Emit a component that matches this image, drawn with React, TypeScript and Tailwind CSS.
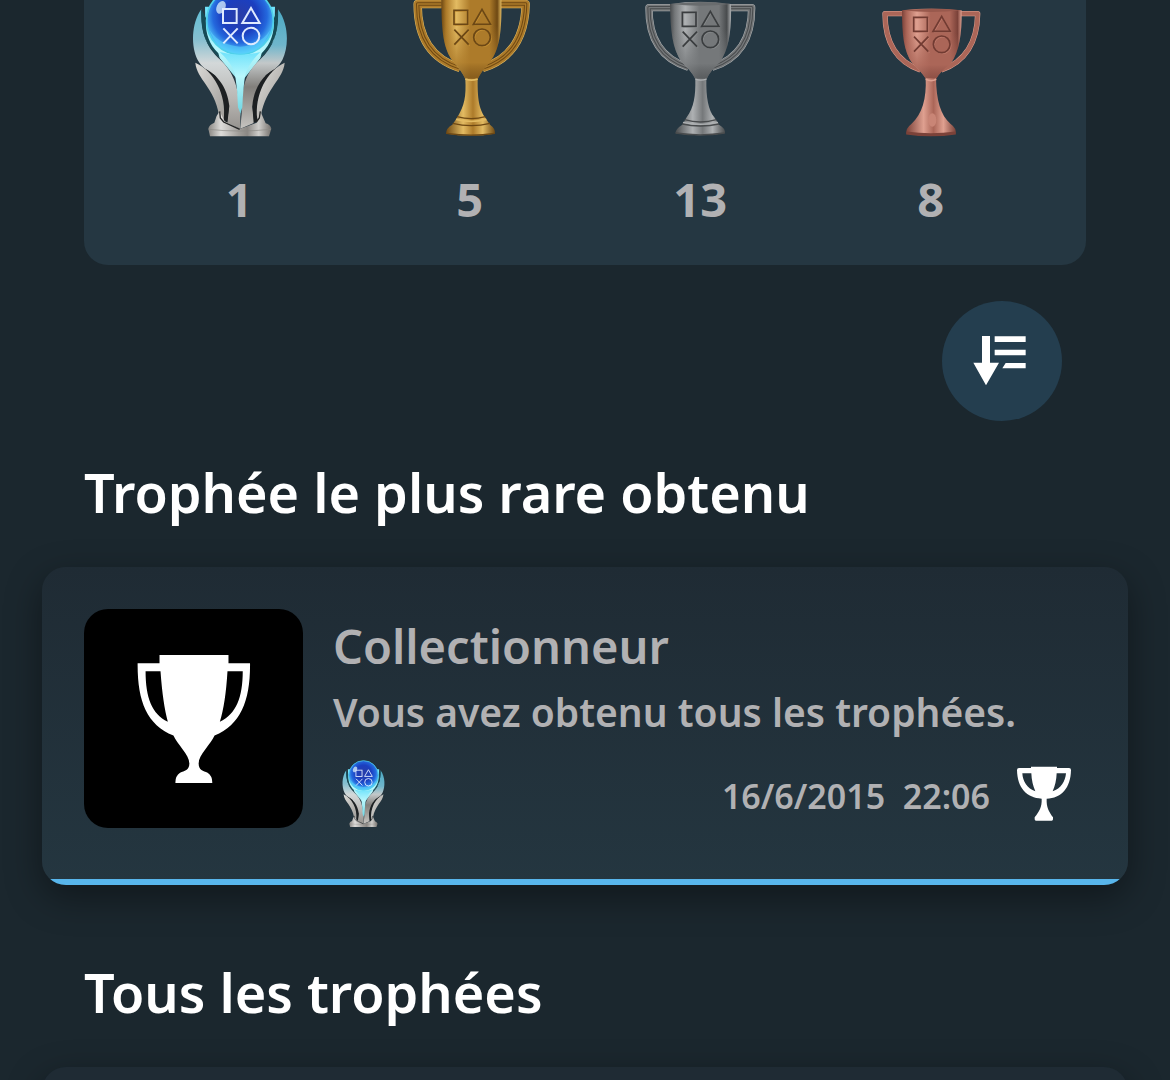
import React from 'react';

/** The four controller shapes engraved on each cup. */
function Shapes({ x, y, color, width = 5, highlight }: { x: number; y: number; color: string; width?: number; highlight?: string }) {
  const shapes = (
    <>
      <rect x="0" y="3" width="41" height="42" />
      <path d="M84 0 L110 45 H58 Z" />
      <path d="M1 61 L44 106 M44 61 L1 106" />
      <circle cx="84" cy="84" r="25" />
    </>
  );
  return (
    <g transform={`translate(${x} ${y})`} fill="none" strokeWidth={width}>
      {highlight && (
        <g transform="translate(3 3)" stroke={highlight} strokeWidth="2">
          {shapes}
        </g>
      )}
      <g stroke={color}>{shapes}</g>
    </g>
  );
}

function PlatinumTrophy({ id, className, viewBox }: { id: string; className: string; viewBox: string }) {
  return (
    <svg className={className} viewBox={viewBox} role="img" aria-label="Platine">
      <defs>
        <radialGradient id={`${id}-orb`} cx="0.5" cy="0.42" r="0.6">
          <stop offset="0" stopColor="#2a3da6" />
          <stop offset="0.45" stopColor="#1b3fc0" />
          <stop offset="0.68" stopColor="#2468dd" />
          <stop offset="0.88" stopColor="#4bb9f6" />
          <stop offset="1" stopColor="#6be6fb" />
        </radialGradient>
        <linearGradient id={`${id}-wing`} x1="0" y1="0" x2="0" y2="1">
          <stop offset="0" stopColor="#63bfd6" />
          <stop offset="0.25" stopColor="#86bfd0" />
          <stop offset="0.45" stopColor="#d3d8d9" />
          <stop offset="0.75" stopColor="#b9b7b4" />
          <stop offset="1" stopColor="#96938f" />
        </linearGradient>
        <linearGradient id={`${id}-wing-right`} x1="0" y1="0" x2="0" y2="1">
          <stop offset="0" stopColor="#4ba9c4" />
          <stop offset="0.3" stopColor="#6fb6cc" />
          <stop offset="0.45" stopColor="#c3c8c9" />
          <stop offset="0.65" stopColor="#827f7b" />
          <stop offset="1" stopColor="#c6c4c0" />
        </linearGradient>
        <linearGradient id={`${id}-base`} x1="0" y1="0" x2="1" y2="0">
          <stop offset="0" stopColor="#8a8783" />
          <stop offset="0.2" stopColor="#dddcda" />
          <stop offset="0.48" stopColor="#a19e9a" />
          <stop offset="0.62" stopColor="#8b8884" />
          <stop offset="0.8" stopColor="#cfcecb" />
          <stop offset="1" stopColor="#75716d" />
        </linearGradient>
        <linearGradient id={`${id}-glow`} x1="0" y1="0" x2="0" y2="1">
          <stop offset="0" stopColor="#6fe2fb" />
          <stop offset="0.4" stopColor="#b9f7fc" />
          <stop offset="1" stopColor="#6fd5e2" />
        </linearGradient>
        <linearGradient id={`${id}-lower`} x1="0" y1="0" x2="1" y2="1">
          <stop offset="0" stopColor="#dcdbd8" />
          <stop offset="1" stopColor="#a09d99" />
        </linearGradient>
      </defs>
      <path d="M78 20 L80 120 L120 172 L176 240 L184 350 L192 240 L246 172 L286 120 L288 20 Z" fill={`url(#${id}-glow)`} />
      <path d="M67 28 C36 72 36 140 56 180 C68 202 88 214 108 226 L150 320 L144 368 L184 386 V340 C178 270 170 222 122 178 C84 142 66 104 67 28 Z" fill={`url(#${id}-wing)`} />
      <path d="M297 28 C330 72 330 140 310 180 C298 202 278 214 260 226 L220 320 L226 368 L184 386 L188 340 C188 270 194 222 244 178 C282 142 298 104 297 28 Z" fill={`url(#${id}-wing-right)`} />
      <path d="M67 28 C64 92 78 136 122 174 L118 160 C86 128 78 92 81 54 Z M297 28 C300 92 286 136 244 174 L248 160 C280 128 286 92 285 54 Z" fill="#164b56" />
      <circle cx="183" cy="63" r="100" fill={`url(#${id}-orb)`} stroke="#4fd0ea" strokeWidth="5" />
      <path d="M92 90 Q116 158 183 163 Q250 158 274 90 Q244 136 183 140 Q122 136 92 90 Z" fill="#58d0fb" opacity="0.6" />
      <ellipse cx="126" cy="22" rx="13" ry="20" fill="#e8fbff" opacity="0.7" transform="rotate(25 126 22)" />
      <path d="M122 156 Q183 172 244 156 Q206 192 198 228 Q192 270 190 322 L184 340 L177 322 Q176 270 168 222 Q156 186 122 156 Z" fill={`url(#${id}-glow)`} />
      <path d="M64 200 C112 216 146 262 151 318 L145 370 L134 362 C140 310 124 262 92 234 Z" fill="#1d2022" />
      <path d="M49 188 C54 240 106 260 120 345 L134 360 C144 284 104 212 49 188 Z" fill={`url(#${id}-lower)`} />
      <path d="M302 200 C256 216 224 262 220 318 L224 370 L236 362 C228 310 244 262 274 234 Z" fill="#1d2022" />
      <path d="M317 188 C312 240 262 260 246 345 L235 358 C226 284 264 212 317 188 Z" fill={`url(#${id}-lower)`} />
      <path d="M122 334 Q110 348 106 368 Q90 374 88 386 L93 409 H270 L277 386 Q274 374 260 370 L244 334 L233 368 L184 386 L137 364 Z" fill={`url(#${id}-base)`} />
      <path d="M122 334 L124 354 L134 366 L182 388 M244 334 L241 354 L232 366" stroke="#222323" strokeWidth="4" fill="none" />
      <path d="M89 388 Q180 398 276 388" stroke="#8b8985" strokeWidth="2" fill="none" />
      <Shapes x={132} y={24} color="#dfeaff" width={6} />
    </svg>
  );
}

type Metal = {
  id: string;
  label: string;
  dark: string;
  mid: string;
  light: string;
  engraved: string;
};

function metalGradients({ id, dark, mid, light }: Metal) {
  return (
    <defs>
      <linearGradient id={`${id}-cup`} x1="0" y1="0" x2="1" y2="0">
        <stop offset="0" stopColor={dark} />
        <stop offset="0.08" stopColor={mid} />
        <stop offset="0.25" stopColor={light} />
        <stop offset="0.48" stopColor={mid} />
        <stop offset="0.8" stopColor={mid} />
        <stop offset="0.93" stopColor={dark} />
        <stop offset="1" stopColor={light} />
      </linearGradient>
      <linearGradient id={`${id}-stem`} x1="0" y1="0" x2="1" y2="0">
        <stop offset="0" stopColor={dark} />
        <stop offset="0.35" stopColor={light} />
        <stop offset="0.55" stopColor={mid} />
        <stop offset="0.75" stopColor={light} />
        <stop offset="1" stopColor={dark} />
      </linearGradient>
      <linearGradient id={`${id}-shade`} x1="0" y1="0" x2="0" y2="1">
        <stop offset="0.35" stopColor={mid} stopOpacity="0" />
        <stop offset="0.8" stopColor={mid} stopOpacity="0.8" />
        <stop offset="1" stopColor={dark} stopOpacity="0.6" />
      </linearGradient>
    </defs>
  );
}

function Handles({ paths, metal, width }: { paths: string; metal: Metal; width: number }) {
  return (
    <g fill="none" strokeLinejoin="round">
      <path d={paths} stroke={metal.light} strokeWidth={width} />
      <path d={paths} stroke={metal.mid} strokeWidth={width - 3} />
      {width > 20 && <path d={paths} stroke={metal.dark} strokeWidth="10" />}
      {width > 20 && <path d={paths} stroke={metal.mid} strokeWidth="4" />}
    </g>
  );
}

const gold: Metal = { id: 'gold', label: 'Or', dark: '#6e4813', mid: '#ad7b2a', light: '#e3bb62', engraved: '#6b4715' };
const silver: Metal = { id: 'silver', label: 'Argent', dark: '#484b4d', mid: '#75787a', light: '#aeb1b3', engraved: '#3a3d3f' };
const bronze: Metal = { id: 'bronze', label: 'Bronze', dark: '#7b4239', mid: '#ab6658', light: '#dfa090', engraved: '#713b32' };

function GoldTrophy() {
  return (
    <svg className="h-[145px] w-[140px]" viewBox="0 0 420 435" role="img" aria-label={gold.label}>
      {metalGradients(gold)}
      <Handles metal={gold} width={25} paths="M125 12 H53 Q52 164 180 204 M300 12 H377 Q374 164 248 204" />
      <path d="M124 -10 H304 C306 90 300 145 271 184 Q245 213 233 237 H196 Q185 213 159 184 C129 145 124 90 124 -10 Z" fill="url(#gold-cup)" />
      <path d="M124 -10 H304 C306 90 300 145 271 184 Q245 213 233 237 H196 Q185 213 159 184 C129 145 124 90 124 -10 Z" fill="url(#gold-shade)" />
      <path d="M196 236 H233 C232 298 238 326 254 350 L270 374 Q287 386 285 401 Q213 412 138 401 Q138 384 157 374 L173 350 C193 316 199 290 196 236 Z" fill="url(#gold-stem)" />
      <path d="M171 350 Q214 362 256 350 M158 370 Q214 384 270 370 M139 400 Q214 411 284 400" stroke={gold.dark} strokeWidth="4" fill="none" />
      <path d="M168 358 Q214 370 259 358 M196 237 Q214 244 233 237" stroke={gold.light} strokeWidth="5" fill="none" />
      <Shapes x={162} y={28} color={gold.engraved} highlight="#cf9837" />
    </svg>
  );
}

function SilverTrophy() {
  return (
    <svg className="h-[145px] w-[130px]" viewBox="0 0 390 435" role="img" aria-label={silver.label}>
      {metalGradients(silver)}
      <Handles metal={silver} width={22} paths="M110 23 H42 Q40 164 160 202 M284 23 H350 Q350 164 231 202" />
      <path d="M105 12 Q195 -1 288 12 C290 92 282 146 255 186 Q226 211 215 237 H181 Q168 211 140 186 C112 146 106 92 105 12 Z" fill="url(#silver-cup)" />
      <path d="M105 12 Q195 -1 288 12 C290 92 282 146 255 186 Q226 211 215 237 H181 Q168 211 140 186 C112 146 106 92 105 12 Z" fill="url(#silver-shade)" />
      <path d="M106 12 Q195 22 287 12 Q195 1 106 12 Z" fill="#696c6e" />
      <path d="M181 236 H214 C213 294 220 330 238 352 L252 374 Q272 385 270 400 Q195 412 121 400 Q122 386 142 374 L155 352 C177 320 182 290 181 236 Z" fill="url(#silver-stem)" />
      <path d="M149 359 Q196 373 244 359 M142 372 Q196 384 252 372 M122 399 Q196 410 269 399" stroke={silver.dark} strokeWidth="4" fill="none" />
      <path d="M181 237 Q197 244 215 237 M144 367 Q196 379 249 367" stroke={silver.light} strokeWidth="4" fill="none" />
      <Shapes x={142} y={34} color={silver.engraved} highlight="#8f9294" />
    </svg>
  );
}

function BronzeTrophy() {
  return (
    <svg className="h-[145px] w-[120px]" viewBox="0 0 360 435" role="img" aria-label={bronze.label}>
      {metalGradients(bronze)}
      <Handles metal={bronze} width={16} paths="M98 41 H42 Q42 172 148 210 M268 41 H320 Q318 172 211 210" />
      <path d="M93 31 Q180 20 272 31 C273 104 265 153 240 190 Q207 215 195 237 H165 Q151 215 124 190 C98 153 93 104 93 31 Z" fill="url(#bronze-cup)" />
      <path d="M93 31 Q180 20 272 31 C273 104 265 153 240 190 Q207 215 195 237 H165 Q151 215 124 190 C98 153 93 104 93 31 Z" fill="url(#bronze-shade)" />
      <path d="M94 31 Q182 41 271 31 Q180 23 94 31 Z" fill="#99594d" />
      <path d="M164 235 H195 C196 300 208 346 239 372 Q257 385 254 401 Q180 412 106 401 Q104 385 121 372 C154 344 167 294 164 235 Z" fill="url(#bronze-stem)" />
      <path d="M106 399 Q180 410 254 399" stroke={bronze.dark} strokeWidth="9" fill="none" />
      <path d="M164 238 Q181 246 196 238" stroke={bronze.light} strokeWidth="5" fill="none" />
      <ellipse cx="184" cy="360" rx="12" ry="20" fill="#c98576" />
      <Shapes x={128} y={49} color={bronze.engraved} highlight="#c98576" />
    </svg>
  );
}

function TrophyTile() {
  return (
    <div className="flex size-[219px] shrink-0 items-center justify-center rounded-3xl bg-black">
      <svg className="h-32 w-[114px]" viewBox="159 163 340 386" fill="#fff" role="img" aria-label="Trophée">
        <path fillRule="evenodd" d="M225 163 H433 V188 H498 C499 300 470 373 391 406 C380 432 343 464 343 490 C343 511 357 512 370 518 Q385 528 384 549 H273 Q272 528 287 518 C300 512 315 511 315 490 C315 464 278 432 267 406 C186 373 158 300 159 188 H225 Z M183 212 C183 290 202 342 250 364 Q235 310 228 212 Z M430 212 Q424 310 407 364 C456 342 476 290 476 212 Z" />
      </svg>
    </div>
  );
}

function EarnedIcon() {
  return (
    <svg className="size-14" viewBox="948 79 168 168" fill="#fff" role="img" aria-label="Obtenu">
      <path fillRule="evenodd" d="M993 81 H1071 V85 H1107 Q1113 85 1113 91 C1112 145 1084 176 1040 177 C1039 203 1046 214 1059 233 V239 Q1059 243 1055 243 H1008 Q1004 243 1004 239 V233 C1018 214 1026 203 1025 177 C980 174 952 145 951 91 Q951 85 957 85 H993 Z M967 101 C968 125 982 147 1006 155 Q995 130 994 101 Z M1070 101 Q1069 130 1058 155 C1083 147 1096 125 1098 101 Z" />
    </svg>
  );
}

function SortIcon() {
  return (
    <svg className="h-[54px] w-[58px]" viewBox="130 138 174 162" fill="#fff" aria-hidden="true">
      <path d="M157 144 H181 V224 H208 L169 292 L131 224 H157 Z M195 145 H288 V162 H195 Z M195 185 H288 V202 H195 Z M228 225 H288 V241 H218 Z" />
    </svg>
  );
}

const counts = [
  { key: 'platinum', count: 1, icon: <PlatinumTrophy id="platinum" className="h-[145px] w-[120px]" viewBox="0 0 360 435" /> },
  { key: 'gold', count: 5, icon: <GoldTrophy /> },
  { key: 'silver', count: 13, icon: <SilverTrophy /> },
  { key: 'bronze', count: 8, icon: <BronzeTrophy /> },
];

export default function App() {
  return (
    <main className="h-screen overflow-hidden bg-[#1b272e] font-['Noto_Sans',sans-serif] font-semibold text-[#b1b1b3]">
      <section className="mx-[84px] rounded-b-3xl bg-[#253742] px-10 pb-[34px]">
        <ul className="grid grid-cols-4">
          {counts.map(({ key, count, icon }) => (
            <li key={key} className="flex flex-col items-center gap-[22px]">
              {icon}
              <span className="text-[47px] leading-[64px] font-bold">{count}</span>
            </li>
          ))}
        </ul>
      </section>

      <div className="mx-[108px] mt-9 flex justify-end">
        <button type="button" aria-label="Trier" className="flex size-[120px] items-center justify-center rounded-full bg-[#243e4f]">
          <SortIcon />
        </button>
      </div>

      <h2 className="mx-[84px] mt-9 text-[54px] leading-[70px] text-white">Trophée le plus rare obtenu</h2>

      <article className="mx-[42px] mt-10 overflow-hidden rounded-3xl bg-linear-to-b from-[#1f2b34] to-[#243640] shadow-[0_12px_36px_rgba(0,0,0,0.4)]">
        <div className="flex gap-[30px] px-[42px] pt-[42px] pb-[50px]">
          <TrophyTile />
          <div className="min-w-0 flex-1">
            <h3 className="mt-1 text-[47px] leading-[66px]">Collectionneur</h3>
            <p className="text-[39px] leading-[66px] whitespace-nowrap">Vous avez obtenu tous les trophées.</p>
            <div className="mt-[14px] flex items-center justify-between pr-[14px]">
              <PlatinumTrophy id="small" className="h-[70px] w-[60px]" viewBox="-22 -48 403 470" />
              <div className="flex items-center gap-[26px]">
                <time dateTime="2015-06-16T22:06" className="pt-1 text-[34px] leading-[48px] whitespace-pre">16/6/2015  22:06</time>
                <EarnedIcon />
              </div>
            </div>
          </div>
        </div>
        <div className="h-1.5 bg-[#58b6ec]" />
      </article>

      <h2 className="mx-[84px] mt-[72px] text-[54px] leading-[70px] text-white">Tous les trophées</h2>

      <article className="mx-[42px] mt-10 h-40 rounded-3xl bg-[#1f2b34] shadow-[0_12px_36px_rgba(0,0,0,0.4)]" aria-label="Trophée suivant" />
    </main>
  );
}
